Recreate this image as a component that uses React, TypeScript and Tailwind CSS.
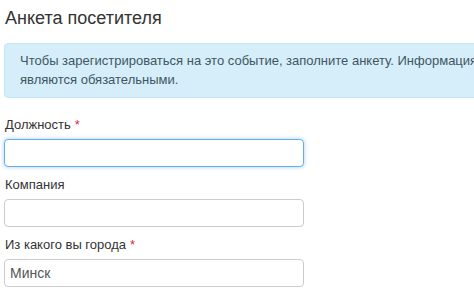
export default function App() {
  const font = { fontFamily: '"Liberation Sans", Arial, sans-serif' };
  return (
    <div className="h-[297px] w-[474px] overflow-hidden bg-white pl-[4px] text-[#333]" style={font}>
      <h1 className="pt-[8px] pl-[1px] text-[18px] leading-[20px] font-normal text-[#333]">Анкета посетителя</h1>

      <div className="mt-[15px] w-[560px] rounded-[4px] border border-[#c3e8f5] bg-[#d6eef9] px-[15px] py-[8px] text-[13px] leading-[18.5px] text-[#3f5663]">
        <div className="whitespace-nowrap">Чтобы зарегистрироваться на это событие, заполните анкету. Информация</div>
        <div>являются обязательными.</div>
      </div>

      <form className="mt-[18px] w-[300px]">
        <Field label="Должность" required focused />
        <Field label="Компания" />
        <Field label="Из какого вы города" required value="Минск" />
      </form>
    </div>
  );
}

function Field({
  label,
  required,
  focused,
  value,
}: {
  label: string;
  required?: boolean;
  focused?: boolean;
  value?: string;
}) {
  return (
    <div className="mb-[9px]">
      <label className="block pl-[1px] text-[13px] leading-[18px] text-[#333]">
        {label}
        {required ? <span className="ml-[4px] text-[#e0283c]">*</span> : null}
      </label>
      <input
        className={
          "mt-[5px] block h-[28px] w-[300px] rounded-[4px] border bg-white px-[5px] text-[14px] text-[#555] outline-none " +
          (focused
            ? "border-[#66afe9] shadow-[0_0_4px_rgba(102,175,233,0.6)]"
            : "border-[#ccc]")
        }
        defaultValue={value || ""}
        style={{ fontFamily: '"Liberation Sans", Arial, sans-serif' }}
      />
    </div>
  );
}
